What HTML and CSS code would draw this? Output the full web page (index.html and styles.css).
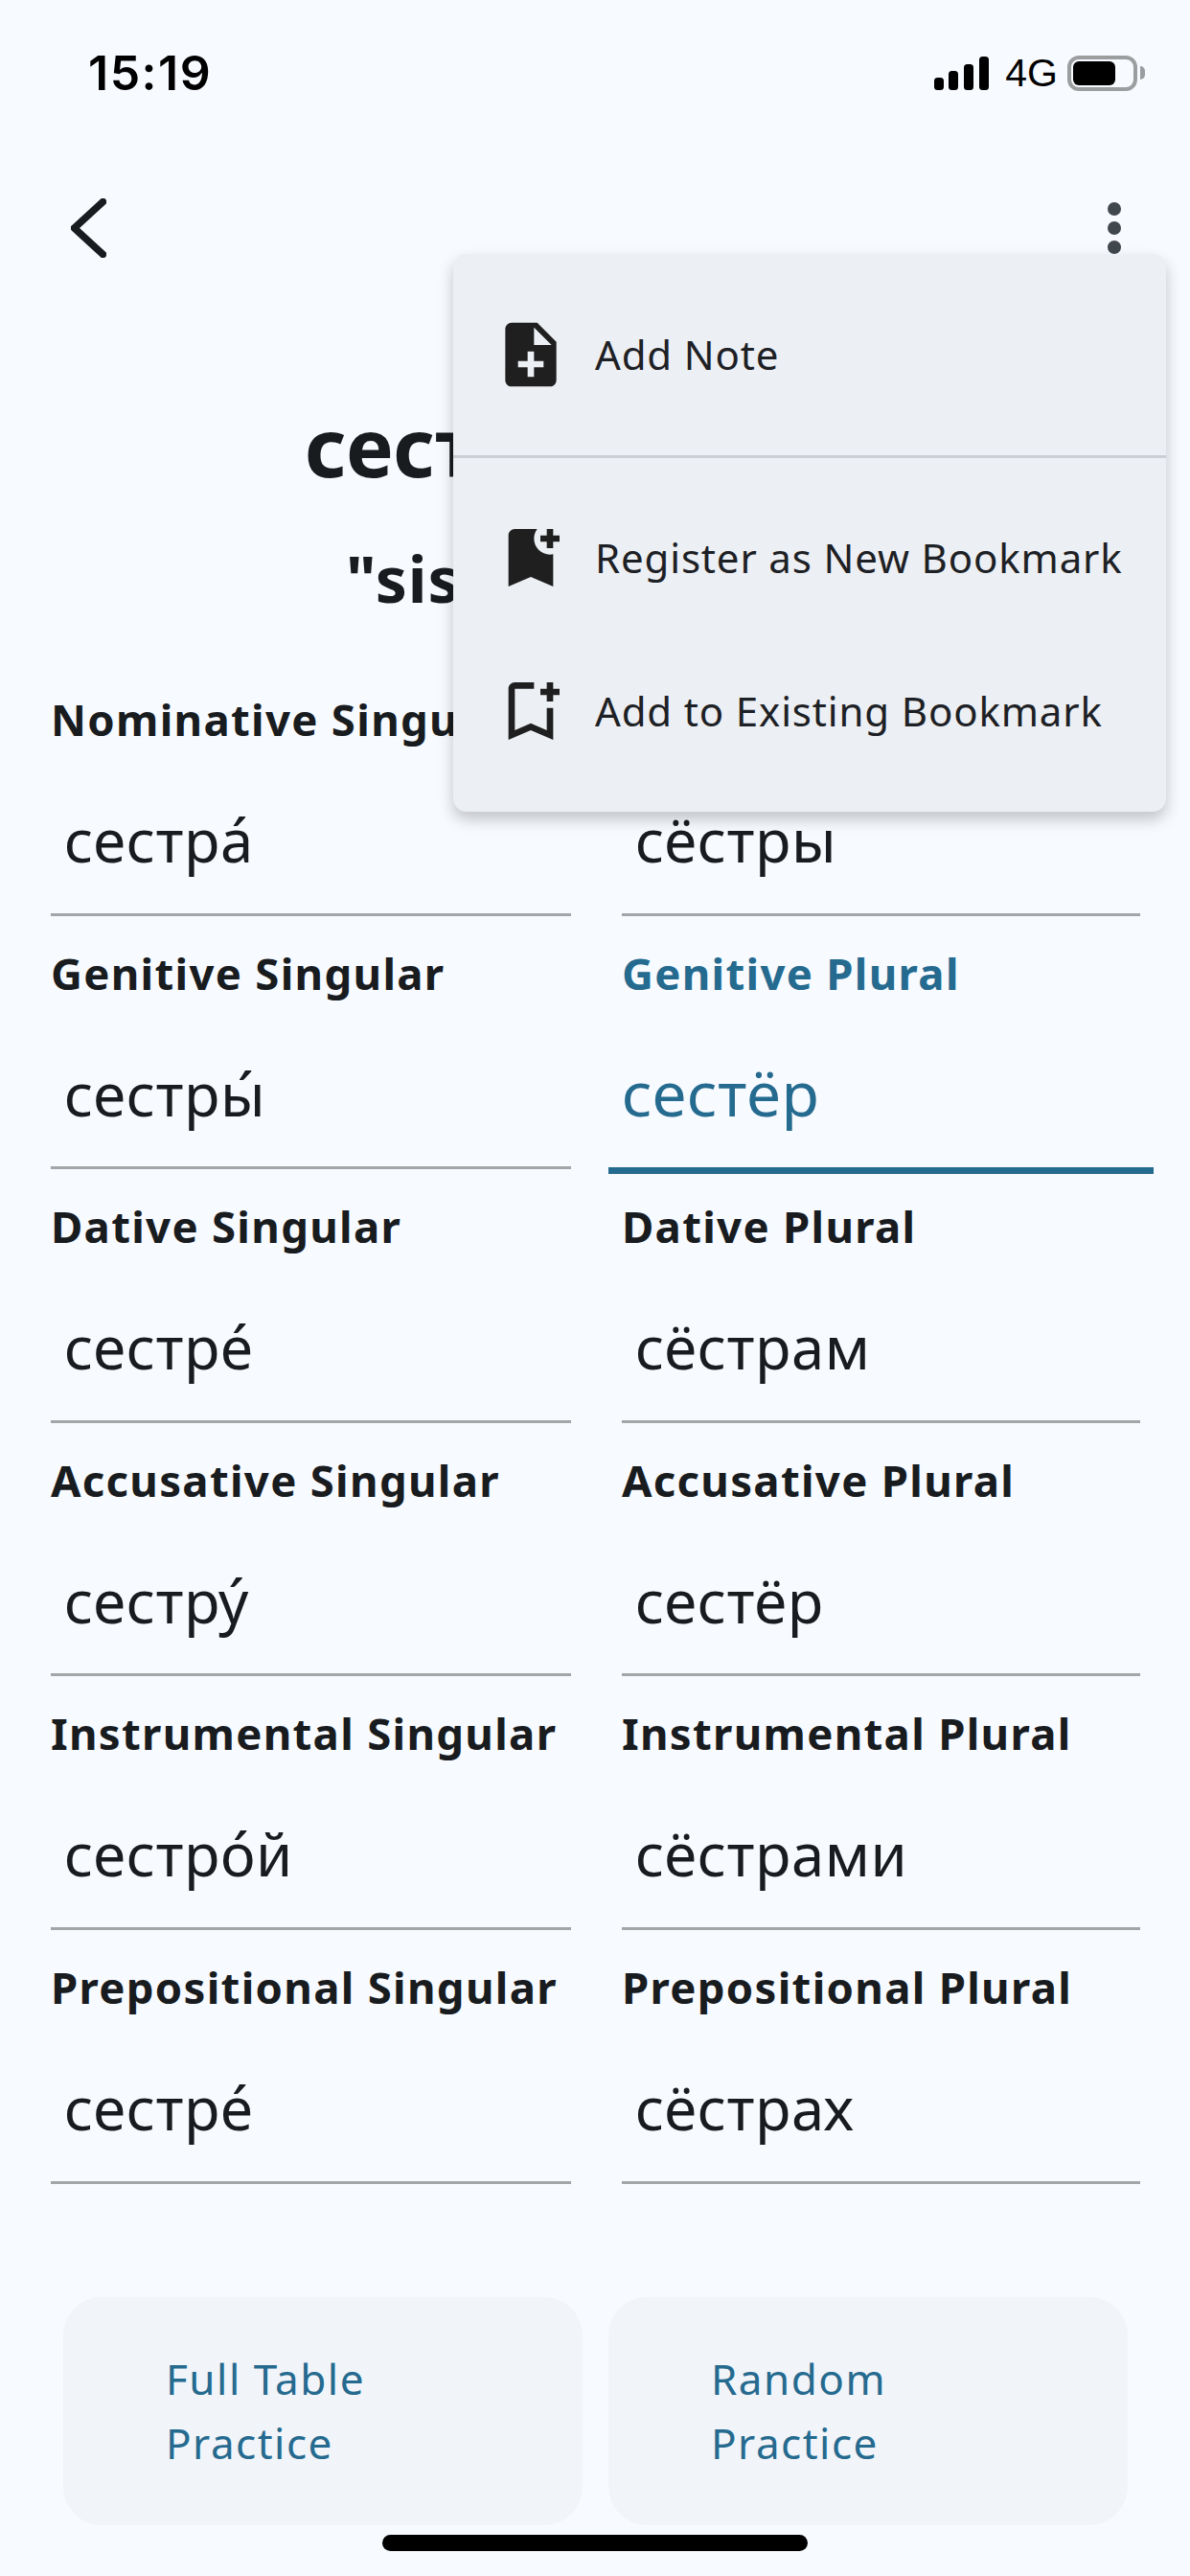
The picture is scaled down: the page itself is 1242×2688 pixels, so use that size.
FILE: index.html
```html
<!DOCTYPE html>
<html lang="en">
<head>
<meta charset="utf-8">
<title>сестра</title>
<link rel="stylesheet" href="styles.css">
</head>
<body>
<div class="screen">
  <header class="status">
    <span class="time">15:19</span>
    <div class="status-right">
      <svg class="signal" viewBox="0 0 57 35"><rect x="0" y="22" width="10" height="13" rx="3.5"/><rect x="15" y="15" width="10" height="20" rx="3.5"/><rect x="31" y="8" width="10" height="27" rx="3.5"/><rect x="47" y="0" width="10" height="35" rx="3.5"/></svg>
      <span class="net">4G</span>
      <div class="battery"><div class="battery-fill"></div></div>
      <div class="battery-nub"></div>
    </div>
  </header>
  <nav class="toolbar">
    <svg class="back" viewBox="0 0 37 62"><path d="M33.500 3.500 3.500 31l30 27.500"/></svg>
    <div class="kebab"><i></i><i></i><i></i></div>
  </nav>
  <h1 class="title">сестра́</h1>
  <h2 class="subtitle">"sister"</h2>
  <section class="table">
    <div class="field"><div class="label">Nominative Singular</div><div class="value">сестра́</div></div>
    <div class="field"><div class="label">Nominative Plural</div><div class="value">сёстры</div></div>
    <div class="field"><div class="label">Genitive Singular</div><div class="value">сестры́</div></div>
    <div class="field active"><div class="label">Genitive Plural</div><div class="value">сестёр</div></div>
    <div class="field"><div class="label">Dative Singular</div><div class="value">сестре́</div></div>
    <div class="field"><div class="label">Dative Plural</div><div class="value">сёстрам</div></div>
    <div class="field"><div class="label">Accusative Singular</div><div class="value">сестру́</div></div>
    <div class="field"><div class="label">Accusative Plural</div><div class="value">сестёр</div></div>
    <div class="field"><div class="label">Instrumental Singular</div><div class="value">сестро́й</div></div>
    <div class="field"><div class="label">Instrumental Plural</div><div class="value">сёстрами</div></div>
    <div class="field"><div class="label">Prepositional Singular</div><div class="value">сестре́</div></div>
    <div class="field"><div class="label">Prepositional Plural</div><div class="value">сёстрах</div></div>
  </section>
  <div class="actions">
    <button class="action">Full Table<br>Practice</button>
    <button class="action">Random<br>Practice</button>
  </div>
  <div class="home"></div>

  <div class="menu">
    <div class="menu-group">
      <div class="menu-item">
        <svg class="menu-icon" viewBox="0 0 24 24"><path d="M14 2H6c-1.100 0-1.990.9-1.990 2L4 20c0 1.100.89 2 1.990 2H18c1.100 0 2-.9 2-2V8l-6-6zm2 14h-3v3h-2v-3H8v-2h3v-3h2v3h3v2zm-3-7V3.500L18.500 9H13z"/></svg>
        <span>Add Note</span>
      </div>
    </div>
    <div class="menu-group">
      <div class="menu-item">
        <svg class="menu-icon" viewBox="0 0 24 24"><path d="M21 7h-2v2h-2V7h-2V5h2V3h2v2h2v2zM19 21l-7-3-7 3V5c0-1.100.9-2 2-2h7c-.63.84-1 1.870-1 3 0 2.760 2.240 5 5 5 .34 0 .68-.03 1-.1V21z"/></svg>
        <span>Register as New Bookmark</span>
      </div>
      <div class="menu-item">
        <svg class="menu-icon" viewBox="0 0 24 24"><path d="M17 11v6.970l-5-2.140-5 2.140V5h6V3H7c-1.100 0-2 .9-2 2v16l7-3 7 3V11h-2zM21 7h-2v2h-2V7h-2V5h2V3h2v2h2v2z"/></svg>
        <span>Add to Existing Bookmark</span>
      </div>
    </div>
  </div>
</div>
</body>
</html>
```
FILE: styles.css
```css
* { box-sizing: border-box; }
html, body { margin: 0; padding: 0; }
body { background: #f7faff; font-family: "Noto Sans", sans-serif; color: #191c1f; }
.screen { position: relative; width: 1242px; height: 2688px; overflow: hidden; background: #f7faff; }

.status { height: 152px; display: flex; align-items: center; justify-content: space-between; padding: 0 47px 0 92px; }
.time { font-family: Inter, sans-serif; font-size: 50px; font-weight: 600; letter-spacing: 1.5px; color: #000; line-height: 1; }
.status-right { display: flex; align-items: center; }
.signal { width: 57px; height: 35px; fill: #000; }
.net { font-family: "Liberation Sans", sans-serif; font-size: 41px; color: #000; line-height: 1; margin-left: 17px; }
.battery { width: 73px; height: 37px; margin-left: 10px; border: 4px solid #9b9d9f; border-radius: 12px; padding: 2px; display: flex; }
.battery-fill { width: 44px; background: #000; border-radius: 6px; }
.battery-nub { width: 5px; height: 14px; margin-left: 3px; background: #9b9d9f; border-radius: 0 7px 7px 0; }

.toolbar { height: 136px; margin-top: 18px; display: flex; align-items: center; justify-content: space-between; padding: 0 72px 0 74px; }
.back { width: 37px; height: 62px; fill: none; stroke: #191c1f; stroke-width: 7.5; stroke-linecap: round; stroke-linejoin: round; }
.kebab { display: flex; flex-direction: column; gap: 6px; }
.kebab i { display: block; width: 14px; height: 14px; border-radius: 50%; background: #41484d; }

.title { margin: 110px 0 0; padding-left: 318px; font-size: 84px; line-height: 100px; font-weight: 700; }
.subtitle { margin: 47px 0 0; padding-left: 361px; font-size: 66px; line-height: 80px; font-weight: 700; letter-spacing: 1px; }

.table { margin: 48px 53px 0; display: grid; grid-template-columns: 543px 541px; column-gap: 53px; grid-auto-rows: 264.6px; }
.field { display: flex; flex-direction: column; }
.label { font-size: 45.5px; line-height: 60px; font-weight: 700; letter-spacing: 1.3px; margin-top: 29px; white-space: nowrap; }
.value { flex: 1; padding: 55px 0 0 14px; font-size: 61.5px; line-height: 82px; letter-spacing: .6px; border-bottom: 3.5px solid #a3a5a6; white-space: nowrap; }
.field.active .label { color: #256a8f; }
.field.active .value { margin: 0 -14px -5px; padding: 54px 0 0 14px; color: #256a8f; font-size: 64.5px; border-bottom: 7.5px solid #256a8f; }

.actions { margin: 118px 0 0 66px; display: flex; gap: 27px; }
.action { width: 542px; height: 238px; border: 0; border-radius: 40px; background: #f1f4f9; color: #256a8f; font-family: inherit; font-size: 44px; line-height: 67px; letter-spacing: 1.5px; text-align: left; padding: 0 0 0 107px; }
.home { margin: 10px auto 0; width: 444px; height: 17px; border-radius: 9px; background: #000; }

.menu { position: absolute; left: 473px; top: 265px; width: 744px; background: #eceff3; border-radius: 14px; box-shadow: 0 8px 16px rgba(0,0,0,.22); }
.menu-group { padding: 25px 0; }
.menu-group + .menu-group { border-top: 3px solid #cbced4; padding-top: 24px; }
.menu-item { height: 160px; display: flex; align-items: center; padding-left: 41px; font-size: 42px; letter-spacing: .85px; color: #1d2024; gap: 27px; }
.menu-item span { margin-top: -2px; }
.menu-icon { width: 80px; height: 80px; fill: #1f1f1f; flex: none; }
```
